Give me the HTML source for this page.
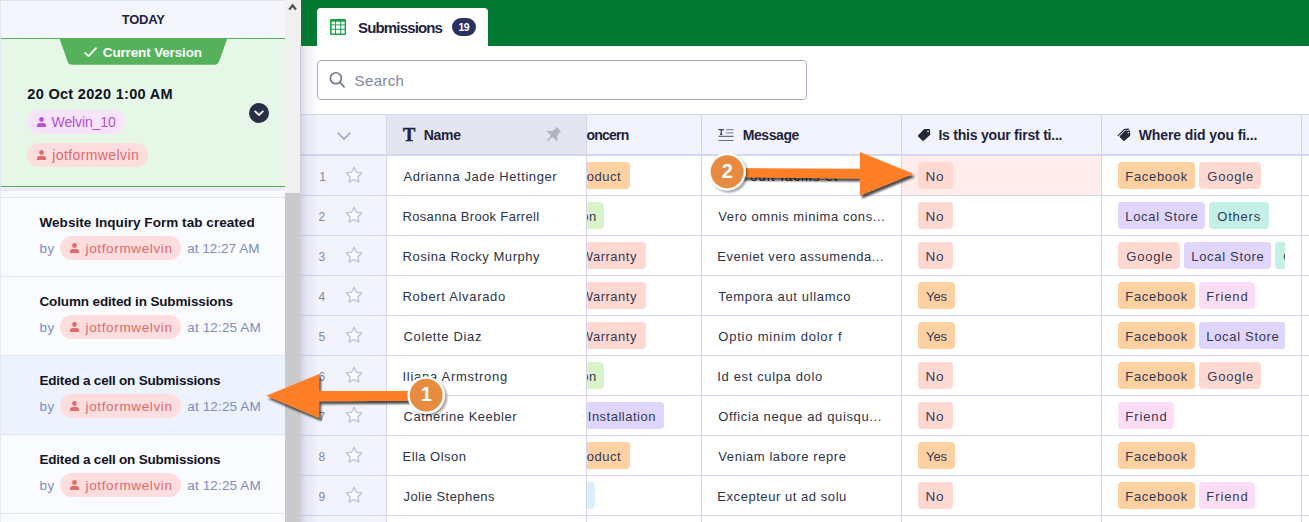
<!DOCTYPE html>
<html lang="en">
<head>
<meta charset="utf-8">
<title>Submissions - Revision History</title>
<style>
*{box-sizing:border-box;margin:0;padding:0}
html,body{width:1309px;height:522px;overflow:hidden;background:#fff}
body{font-family:"Liberation Sans",sans-serif;color:#2c3345;position:relative}
.abs{position:absolute}
.tx{position:absolute;white-space:nowrap;line-height:20px}
#side{position:absolute;left:0;top:0;width:285px;height:522px;background:#fafbfe;overflow:hidden}
#edge{position:absolute;left:0;top:0;width:1px;height:522px;background:#e4e8f3}
#today{position:absolute;left:0;top:0;width:285px;height:38px;background:#f5f5fc;border-top:1px solid #dfe0f1}
#cur{position:absolute;left:0;top:38px;width:285px;height:149px;background:#e6f6e7;border-top:1px solid #55b25b;border-bottom:1px solid #55b25b}
.tag{position:absolute;height:24px;border-radius:12px}
.tag.p{background:#f8e3fd}
.tag.r{background:#feddde}
.item{position:absolute;left:0;width:285px;height:79px;border-top:1px solid #e1e3f2}
.item.sel{background:#ecf2fe}
#sb{position:absolute;left:285px;top:0;width:16px;height:522px;background:#f0f0f0}
#thumb{position:absolute;left:0;top:193px;width:15px;height:329px;background:#cacaca}
#main{position:absolute;left:301px;top:0;width:1008px;height:522px;background:#fff;overflow:hidden}
#green{position:absolute;left:0;top:0;width:1008px;height:46px;background:#037a34}
#tab{position:absolute;left:16px;top:8px;width:171px;height:38px;background:#fff;border-radius:4px 4px 0 0}
#cnt{position:absolute;width:24px;height:18px;border-radius:9px;background:#2b3160}
#search{position:absolute;left:16px;top:60px;width:490px;height:40px;border:1px solid #a9adc6;border-radius:4px;background:#fff}
#scroll{position:absolute;left:286px;top:0;width:722px;height:522px;overflow:hidden}
#shadow{position:absolute;left:300px;top:46px;width:19px;height:476px;background:linear-gradient(90deg,rgba(100,100,150,.24),rgba(100,100,150,.10) 35%,rgba(100,100,150,0))}
.chip{position:absolute;height:27px;border-radius:4px}
.c-or{background:#fed0a2}
.c-pk{background:#ffd9d1}
.c-gr{background:#d9f4cb}
.c-pu{background:#e0d5fc}
.c-tl{background:#c4f0e8}
.c-ro{background:#fddcf6}
.c-bl{background:#dbeefc}
</style>
</head>
<body>
<div id="side">
<div id="today"></div>
<span class="tx" style="left:121.70px;top:10.00px;font-size:13px;color:#1d2340;letter-spacing:-0.225px;font-weight:bold;">TODAY</span>
<div id="cur"></div>
<svg class="abs" style="left:59px;top:38px" width="169" height="27" viewBox="0 0 169 27"><path d="M0.3 0H168.4L160.2 23.3Q159 26.8 155.2 26.8H13.5Q9.700000000000001 26.8 8.5 23.3Z" fill="#55b25b"/><path d="M26.1 14.9L29.5 18.1L37 10.2" fill="none" stroke="#fff" stroke-width="1.8" stroke-linecap="round" stroke-linejoin="round"/></svg>
<span class="tx" style="left:102.80px;top:43.00px;font-size:13.5px;color:#fff;letter-spacing:-0.145px;font-weight:bold;">Current Version</span>
<span class="tx" style="left:27.30px;top:84.00px;font-size:14.5px;color:#0f1222;letter-spacing:0.313px;font-weight:bold;">20 Oct 2020 1:00 AM</span>
<div class="tag p" style="left:27px;top:110px;width:98px"></div>
<svg class="abs" style="left:37px;top:117.3px" width="9" height="10" viewBox="0 0 9 10"><circle cx="4.5" cy="2.5" r="2.4" fill="#b552d8"/><path d="M0 10V8.6Q0 5.9 2.7 5.9h3.6Q9 5.9 9 8.6V10z" fill="#b552d8"/></svg>
<span class="tx" style="left:51.60px;top:112.00px;font-size:14px;color:#b24fd4;letter-spacing:-0.128px;">Welvin_10</span>
<div class="tag r" style="left:27px;top:143px;width:121px"></div>
<svg class="abs" style="left:37px;top:150.3px" width="9" height="10" viewBox="0 0 9 10"><circle cx="4.5" cy="2.5" r="2.4" fill="#e06c6c"/><path d="M0 10V8.6Q0 5.9 2.7 5.9h3.6Q9 5.9 9 8.6V10z" fill="#e06c6c"/></svg>
<span class="tx" style="left:52.30px;top:145.00px;font-size:14px;color:#e0696d;letter-spacing:0.391px;">jotformwelvin</span>
<div class="abs" style="left:0;top:187px;width:285px;height:4px;background:#ecebf8"></div>
<svg class="abs" style="left:249px;top:103px" width="20" height="20" viewBox="0 0 20 20"><circle cx="10" cy="10" r="10" fill="#282e46"/><path d="M6.2 8.4l3.8 3.6 3.8-3.6" fill="none" stroke="#fff" stroke-width="1.8" stroke-linecap="round" stroke-linejoin="round"/></svg>
<div class="item" style="top:197px"></div>
<span class="tx" style="left:39.50px;top:213.00px;font-size:13.5px;color:#111424;letter-spacing:0.052px;font-weight:bold;">Website Inquiry Form tab created</span>
<span class="tx" style="left:39.50px;top:239.00px;font-size:13.5px;color:#808cc0;letter-spacing:0.492px;">by</span>
<div class="tag r" style="left:60px;top:236px;width:121px"></div>
<svg class="abs" style="left:70.2px;top:243.4px" width="9" height="10" viewBox="0 0 9 10"><circle cx="4.5" cy="2.5" r="2.4" fill="#e06c6c"/><path d="M0 10V8.6Q0 5.9 2.7 5.9h3.6Q9 5.9 9 8.6V10z" fill="#e06c6c"/></svg>
<span class="tx" style="left:85.50px;top:239.00px;font-size:13.5px;color:#e0696d;letter-spacing:0.645px;">jotformwelvin</span>
<span class="tx" style="left:187.30px;top:239.00px;font-size:13.5px;color:#808cc0;letter-spacing:0.005px;">at 12:27 AM</span>
<div class="item" style="top:276px"></div>
<span class="tx" style="left:39.50px;top:292.00px;font-size:13.5px;color:#111424;letter-spacing:-0.139px;font-weight:bold;">Column edited in Submissions</span>
<span class="tx" style="left:39.50px;top:318.00px;font-size:13.5px;color:#808cc0;letter-spacing:0.492px;">by</span>
<div class="tag r" style="left:60px;top:315px;width:121px"></div>
<svg class="abs" style="left:70.2px;top:322.4px" width="9" height="10" viewBox="0 0 9 10"><circle cx="4.5" cy="2.5" r="2.4" fill="#e06c6c"/><path d="M0 10V8.6Q0 5.9 2.7 5.9h3.6Q9 5.9 9 8.6V10z" fill="#e06c6c"/></svg>
<span class="tx" style="left:85.50px;top:318.00px;font-size:13.5px;color:#e0696d;letter-spacing:0.645px;">jotformwelvin</span>
<span class="tx" style="left:187.30px;top:318.00px;font-size:13.5px;color:#808cc0;letter-spacing:0.135px;">at 12:25 AM</span>
<div class="item sel" style="top:355px"></div>
<span class="tx" style="left:39.50px;top:371.00px;font-size:13.5px;color:#111424;letter-spacing:-0.211px;font-weight:bold;">Edited a cell on Submissions</span>
<span class="tx" style="left:39.50px;top:397.00px;font-size:13.5px;color:#808cc0;letter-spacing:0.492px;">by</span>
<div class="tag r" style="left:60px;top:394px;width:121px"></div>
<svg class="abs" style="left:70.2px;top:401.4px" width="9" height="10" viewBox="0 0 9 10"><circle cx="4.5" cy="2.5" r="2.4" fill="#e06c6c"/><path d="M0 10V8.6Q0 5.9 2.7 5.9h3.6Q9 5.9 9 8.6V10z" fill="#e06c6c"/></svg>
<span class="tx" style="left:85.50px;top:397.00px;font-size:13.5px;color:#e0696d;letter-spacing:0.645px;">jotformwelvin</span>
<span class="tx" style="left:187.30px;top:397.00px;font-size:13.5px;color:#808cc0;letter-spacing:0.135px;">at 12:25 AM</span>
<div class="item" style="top:434px"></div>
<span class="tx" style="left:39.50px;top:450.00px;font-size:13.5px;color:#111424;letter-spacing:-0.211px;font-weight:bold;">Edited a cell on Submissions</span>
<span class="tx" style="left:39.50px;top:476.00px;font-size:13.5px;color:#808cc0;letter-spacing:0.492px;">by</span>
<div class="tag r" style="left:60px;top:473px;width:121px"></div>
<svg class="abs" style="left:70.2px;top:480.4px" width="9" height="10" viewBox="0 0 9 10"><circle cx="4.5" cy="2.5" r="2.4" fill="#e06c6c"/><path d="M0 10V8.6Q0 5.9 2.7 5.9h3.6Q9 5.9 9 8.6V10z" fill="#e06c6c"/></svg>
<span class="tx" style="left:85.50px;top:476.00px;font-size:13.5px;color:#e0696d;letter-spacing:0.645px;">jotformwelvin</span>
<span class="tx" style="left:187.30px;top:476.00px;font-size:13.5px;color:#808cc0;letter-spacing:0.135px;">at 12:25 AM</span>
<div class="item" style="top:513px;height:9px"></div>
<div id="edge"></div>
</div>
<div id="sb">
<svg class="abs" style="left:3px;top:3px" width="10" height="8" viewBox="0 0 10 8"><path d="M1.3 6.6L4.6 2.3L7.9 6.6" fill="none" stroke="#505050" stroke-width="2.3"/></svg>
<div id="thumb"></div>
</div>
<div id="main">
<div id="green"></div>
<div id="tab"></div>
<svg class="abs" style="left:29.4px;top:19px" width="16" height="16" viewBox="0 0 16 16"><rect width="16" height="16" rx="1" fill="#18a34b"/><g fill="#fff"><rect x="1.6" y="2.7" width="3.4" height="2.7"/><rect x="6.0" y="2.7" width="4.2" height="2.7"/><rect x="11.2" y="2.7" width="3.4" height="2.7"/><rect x="1.6" y="6.4" width="3.4" height="3.4"/><rect x="6.0" y="6.4" width="4.2" height="3.4"/><rect x="11.2" y="6.4" width="3.4" height="3.4"/><rect x="1.6" y="10.8" width="3.4" height="3.7"/><rect x="6.0" y="10.8" width="4.2" height="3.7"/><rect x="11.2" y="10.8" width="3.4" height="3.7"/></g></svg>
<span class="tx" style="left:57.00px;top:18.00px;font-size:15px;color:#1d2340;letter-spacing:-0.841px;font-weight:bold;">Submissions</span>
<div id="cnt" style="left:151px;top:18px"></div>
<span class="tx" style="left:157.60px;top:17.00px;font-size:10.5px;color:#fff;letter-spacing:-0.600px;font-weight:bold;">19</span>
<div id="search"></div>
<svg class="abs" style="left:27px;top:71px" width="18" height="18" viewBox="0 0 18 18"><circle cx="7.9" cy="7.3" r="5.5" fill="none" stroke="#6f7690" stroke-width="1.6"/><path d="M12 11.5l4.1 4.3" stroke="#6f7690" stroke-width="1.7" stroke-linecap="round"/></svg>
<span class="tx" style="left:53.60px;top:71.00px;font-size:15px;color:#7f879e;letter-spacing:0.363px;">Search</span>
<div class="abs" style="left:0;top:114px;width:1008px;height:42px;background:#f3f3fe"></div>
<div class="abs" style="left:0;top:155px;width:85px;height:367px;background:#f3f3fe"></div>
<div class="abs" style="left:86px;top:115px;width:200px;height:40px;background:#e3e6f0"></div>
<div class="abs" style="left:601px;top:156px;width:199px;height:39px;background:#ffeceb"></div>
<span class="tx" style="left:18.30px;top:167.00px;font-size:12px;color:#8288a0;">1</span>
<svg class="abs" style="left:44px;top:165.7px" width="18" height="18" viewBox="0 0 18 18"><path d="M9 1.3l2.35 4.95 5.35.7-3.9 3.75.97 5.35L9 13.45l-4.77 2.6.97-5.35L1.300000000000001 6.95l5.35-.7z" fill="#fff" stroke="#b7bad3" stroke-width="1.25" stroke-linejoin="round"/></svg>
<span class="tx" style="left:102.50px;top:167.00px;font-size:13px;color:#2c3345;letter-spacing:0.588px;">Adrianna Jade Hettinger</span>
<span class="tx" style="left:17.40px;top:207.00px;font-size:12px;color:#8288a0;">2</span>
<svg class="abs" style="left:44px;top:205.7px" width="18" height="18" viewBox="0 0 18 18"><path d="M9 1.3l2.35 4.95 5.35.7-3.9 3.75.97 5.35L9 13.45l-4.77 2.6.97-5.35L1.300000000000001 6.95l5.35-.7z" fill="#fff" stroke="#b7bad3" stroke-width="1.25" stroke-linejoin="round"/></svg>
<span class="tx" style="left:101.50px;top:207.00px;font-size:13px;color:#2c3345;letter-spacing:0.332px;">Rosanna Brook Farrell</span>
<span class="tx" style="left:17.40px;top:247.00px;font-size:12px;color:#8288a0;">3</span>
<svg class="abs" style="left:44px;top:245.7px" width="18" height="18" viewBox="0 0 18 18"><path d="M9 1.3l2.35 4.95 5.35.7-3.9 3.75.97 5.35L9 13.45l-4.77 2.6.97-5.35L1.300000000000001 6.95l5.35-.7z" fill="#fff" stroke="#b7bad3" stroke-width="1.25" stroke-linejoin="round"/></svg>
<span class="tx" style="left:101.50px;top:247.00px;font-size:13px;color:#2c3345;letter-spacing:0.552px;">Rosina Rocky Murphy</span>
<span class="tx" style="left:17.40px;top:287.00px;font-size:12px;color:#8288a0;">4</span>
<svg class="abs" style="left:44px;top:285.7px" width="18" height="18" viewBox="0 0 18 18"><path d="M9 1.3l2.35 4.95 5.35.7-3.9 3.75.97 5.35L9 13.45l-4.77 2.6.97-5.35L1.300000000000001 6.95l5.35-.7z" fill="#fff" stroke="#b7bad3" stroke-width="1.25" stroke-linejoin="round"/></svg>
<span class="tx" style="left:101.50px;top:287.00px;font-size:13px;color:#2c3345;letter-spacing:0.678px;">Robert Alvarado</span>
<span class="tx" style="left:17.40px;top:327.00px;font-size:12px;color:#8288a0;">5</span>
<svg class="abs" style="left:44px;top:325.7px" width="18" height="18" viewBox="0 0 18 18"><path d="M9 1.3l2.35 4.95 5.35.7-3.9 3.75.97 5.35L9 13.45l-4.77 2.6.97-5.35L1.300000000000001 6.95l5.35-.7z" fill="#fff" stroke="#b7bad3" stroke-width="1.25" stroke-linejoin="round"/></svg>
<span class="tx" style="left:102.50px;top:327.00px;font-size:13px;color:#2c3345;letter-spacing:0.645px;">Colette Diaz</span>
<span class="tx" style="left:17.40px;top:367.00px;font-size:12px;color:#8288a0;">6</span>
<svg class="abs" style="left:44px;top:365.7px" width="18" height="18" viewBox="0 0 18 18"><path d="M9 1.3l2.35 4.95 5.35.7-3.9 3.75.97 5.35L9 13.45l-4.77 2.6.97-5.35L1.300000000000001 6.95l5.35-.7z" fill="#fff" stroke="#b7bad3" stroke-width="1.25" stroke-linejoin="round"/></svg>
<span class="tx" style="left:101.50px;top:367.00px;font-size:13px;color:#2c3345;letter-spacing:0.719px;">Iliana Armstrong</span>
<span class="tx" style="left:17.40px;top:407.00px;font-size:12px;color:#8288a0;">7</span>
<svg class="abs" style="left:44px;top:405.7px" width="18" height="18" viewBox="0 0 18 18"><path d="M9 1.3l2.35 4.95 5.35.7-3.9 3.75.97 5.35L9 13.45l-4.77 2.6.97-5.35L1.300000000000001 6.95l5.35-.7z" fill="#fff" stroke="#b7bad3" stroke-width="1.25" stroke-linejoin="round"/></svg>
<span class="tx" style="left:102.50px;top:407.00px;font-size:13px;color:#2c3345;letter-spacing:0.515px;">Catherine Keebler</span>
<span class="tx" style="left:17.40px;top:447.00px;font-size:12px;color:#8288a0;">8</span>
<svg class="abs" style="left:44px;top:445.7px" width="18" height="18" viewBox="0 0 18 18"><path d="M9 1.3l2.35 4.95 5.35.7-3.9 3.75.97 5.35L9 13.45l-4.77 2.6.97-5.35L1.300000000000001 6.95l5.35-.7z" fill="#fff" stroke="#b7bad3" stroke-width="1.25" stroke-linejoin="round"/></svg>
<span class="tx" style="left:101.50px;top:447.00px;font-size:13px;color:#2c3345;letter-spacing:0.465px;">Ella Olson</span>
<span class="tx" style="left:17.40px;top:487.00px;font-size:12px;color:#8288a0;">9</span>
<svg class="abs" style="left:44px;top:485.7px" width="18" height="18" viewBox="0 0 18 18"><path d="M9 1.3l2.35 4.95 5.35.7-3.9 3.75.97 5.35L9 13.45l-4.77 2.6.97-5.35L1.300000000000001 6.95l5.35-.7z" fill="#fff" stroke="#b7bad3" stroke-width="1.25" stroke-linejoin="round"/></svg>
<span class="tx" style="left:102.50px;top:487.00px;font-size:13px;color:#2c3345;letter-spacing:0.440px;">Jolie Stephens</span>
<svg class="abs" style="left:35px;top:131px" width="16" height="10" viewBox="0 0 16 10"><path d="M1.6 1.6l6.4 6.4 6.4-6.4" fill="none" stroke="#aeb1ca" stroke-width="2"/></svg>
<span class="tx" style="left:101.89999999999998px;top:123.6px;font-family:'Liberation Serif',serif;font-weight:bold;font-size:18.5px;line-height:22px;color:#1d2340;-webkit-text-stroke:.45px #1d2340">T</span>
<span class="tx" style="left:122.70px;top:125.00px;font-size:14px;color:#1d2340;letter-spacing:-0.282px;font-weight:bold;">Name</span>
<svg class="abs" style="left:245px;top:126px" width="16" height="16" viewBox="0 0 16 16"><path d="M10.6 0.8L15.1 5.4L13.9 6.1L11.2 9.7L11.5 14.5L10.600000000000001 15L6.3 11L1.3 15.5L0.6 14.8L5 9.7L0.8 5.6L1.4 4.7L6.2 5.200000000000001L9.9 2.3Z" fill="#b1b3bf"/></svg>
<div id="scroll">
<div class="chip c-or" style="left:-87.3px;top:162px;width:130px"></div>
<span class="tx" style="left:-14.29px;top:167.00px;font-size:13px;color:#343a52;letter-spacing:0.500px;">Product</span>
<span class="tx" style="left:130.30px;top:167.00px;font-size:13px;color:#2c3345;letter-spacing:1.107px;">Erat odit facilis et</span>
<div class="chip c-pk" style="left:331px;top:162px;width:34.5px"></div>
<span class="tx" style="left:338.40px;top:167.00px;font-size:13.5px;color:#343a52;letter-spacing:0.800px;">No</span>
<div class="abs" style="left:531px;top:162px;width:166.7px;height:27px;overflow:hidden">
<div class="chip c-or" style="left:0px;top:0;width:77px"></div>
<span class="tx" style="left:7.30px;top:5.00px;font-size:13px;color:#343a52;letter-spacing:0.687px;">Facebook</span>
<div class="chip c-pk" style="left:81px;top:0;width:62px"></div>
<span class="tx" style="left:89.30px;top:5.00px;font-size:13px;color:#343a52;letter-spacing:0.802px;">Google</span>
</div>
<div class="chip c-gr" style="left:-113.3px;top:202px;width:130px"></div>
<span class="tx" style="left:-46.30px;top:207.00px;font-size:13px;color:#343a52;letter-spacing:0.500px;">Question</span>
<span class="tx" style="left:131.30px;top:207.00px;font-size:13px;color:#2c3345;letter-spacing:0.582px;">Vero omnis minima cons...</span>
<div class="chip c-pk" style="left:331px;top:202px;width:34.5px"></div>
<span class="tx" style="left:338.40px;top:207.00px;font-size:13.5px;color:#343a52;letter-spacing:0.800px;">No</span>
<div class="abs" style="left:531px;top:202px;width:166.7px;height:27px;overflow:hidden">
<div class="chip c-pu" style="left:0px;top:0;width:87px"></div>
<span class="tx" style="left:7.30px;top:5.00px;font-size:13px;color:#343a52;letter-spacing:0.677px;">Local Store</span>
<div class="chip c-tl" style="left:91px;top:0;width:60px"></div>
<span class="tx" style="left:99.30px;top:5.00px;font-size:13px;color:#343a52;letter-spacing:0.777px;">Others</span>
</div>
<div class="chip c-pk" style="left:-71.3px;top:242px;width:130px"></div>
<span class="tx" style="left:-6.35px;top:247.00px;font-size:13px;color:#343a52;letter-spacing:0.500px;">Warranty</span>
<span class="tx" style="left:130.30px;top:247.00px;font-size:13px;color:#2c3345;letter-spacing:0.512px;">Eveniet vero assumenda...</span>
<div class="chip c-pk" style="left:331px;top:242px;width:34.5px"></div>
<span class="tx" style="left:338.40px;top:247.00px;font-size:13.5px;color:#343a52;letter-spacing:0.800px;">No</span>
<div class="abs" style="left:531px;top:242px;width:166.7px;height:27px;overflow:hidden">
<div class="chip c-pk" style="left:0px;top:0;width:62px"></div>
<span class="tx" style="left:8.30px;top:5.00px;font-size:13px;color:#343a52;letter-spacing:0.802px;">Google</span>
<div class="chip c-pu" style="left:66px;top:0;width:87px"></div>
<span class="tx" style="left:73.30px;top:5.00px;font-size:13px;color:#343a52;letter-spacing:0.677px;">Local Store</span>
<div class="chip c-tl" style="left:157px;top:0;width:60px"></div>
<span class="tx" style="left:165.30px;top:5.00px;font-size:13px;color:#343a52;letter-spacing:0.777px;">Others</span>
</div>
<div class="chip c-pk" style="left:-71.3px;top:282px;width:130px"></div>
<span class="tx" style="left:-6.35px;top:287.00px;font-size:13px;color:#343a52;letter-spacing:0.500px;">Warranty</span>
<span class="tx" style="left:131.30px;top:287.00px;font-size:13px;color:#2c3345;letter-spacing:0.642px;">Tempora aut ullamco</span>
<div class="chip c-or" style="left:331px;top:282px;width:37px"></div>
<span class="tx" style="left:339.00px;top:287.00px;font-size:13px;color:#343a52;letter-spacing:-0.054px;">Yes</span>
<div class="abs" style="left:531px;top:282px;width:166.7px;height:27px;overflow:hidden">
<div class="chip c-or" style="left:0px;top:0;width:77px"></div>
<span class="tx" style="left:7.30px;top:5.00px;font-size:13px;color:#343a52;letter-spacing:0.687px;">Facebook</span>
<div class="chip c-ro" style="left:81px;top:0;width:56px"></div>
<span class="tx" style="left:88.30px;top:5.00px;font-size:13px;color:#343a52;letter-spacing:0.916px;">Friend</span>
</div>
<div class="chip c-pk" style="left:-71.3px;top:322px;width:130px"></div>
<span class="tx" style="left:-6.35px;top:327.00px;font-size:13px;color:#343a52;letter-spacing:0.500px;">Warranty</span>
<span class="tx" style="left:131.30px;top:327.00px;font-size:13px;color:#2c3345;letter-spacing:0.784px;">Optio minim dolor f</span>
<div class="chip c-or" style="left:331px;top:322px;width:37px"></div>
<span class="tx" style="left:339.00px;top:327.00px;font-size:13px;color:#343a52;letter-spacing:-0.054px;">Yes</span>
<div class="abs" style="left:531px;top:322px;width:166.7px;height:27px;overflow:hidden">
<div class="chip c-or" style="left:0px;top:0;width:77px"></div>
<span class="tx" style="left:7.30px;top:5.00px;font-size:13px;color:#343a52;letter-spacing:0.687px;">Facebook</span>
<div class="chip c-pu" style="left:81px;top:0;width:87px"></div>
<span class="tx" style="left:88.30px;top:5.00px;font-size:13px;color:#343a52;letter-spacing:0.677px;">Local Store</span>
</div>
<div class="chip c-gr" style="left:-113.3px;top:362px;width:130px"></div>
<span class="tx" style="left:-46.30px;top:367.00px;font-size:13px;color:#343a52;letter-spacing:0.500px;">Question</span>
<span class="tx" style="left:130.30px;top:367.00px;font-size:13px;color:#2c3345;letter-spacing:0.641px;">Id est culpa dolo</span>
<div class="chip c-pk" style="left:331px;top:362px;width:34.5px"></div>
<span class="tx" style="left:338.40px;top:367.00px;font-size:13.5px;color:#343a52;letter-spacing:0.800px;">No</span>
<div class="abs" style="left:531px;top:362px;width:166.7px;height:27px;overflow:hidden">
<div class="chip c-or" style="left:0px;top:0;width:77px"></div>
<span class="tx" style="left:7.30px;top:5.00px;font-size:13px;color:#343a52;letter-spacing:0.687px;">Facebook</span>
<div class="chip c-pk" style="left:81px;top:0;width:62px"></div>
<span class="tx" style="left:89.30px;top:5.00px;font-size:13px;color:#343a52;letter-spacing:0.802px;">Google</span>
</div>
<div class="chip c-pu" style="left:-53.3px;top:402px;width:130px"></div>
<span class="tx" style="left:0.78px;top:407.00px;font-size:13px;color:#343a52;letter-spacing:0.500px;">Installation</span>
<span class="tx" style="left:131.30px;top:407.00px;font-size:13px;color:#2c3345;letter-spacing:0.637px;">Officia neque ad quisqu...</span>
<div class="chip c-pk" style="left:331px;top:402px;width:34.5px"></div>
<span class="tx" style="left:338.40px;top:407.00px;font-size:13.5px;color:#343a52;letter-spacing:0.800px;">No</span>
<div class="abs" style="left:531px;top:402px;width:166.7px;height:27px;overflow:hidden">
<div class="chip c-ro" style="left:0px;top:0;width:56px"></div>
<span class="tx" style="left:7.30px;top:5.00px;font-size:13px;color:#343a52;letter-spacing:0.916px;">Friend</span>
</div>
<div class="chip c-or" style="left:-87.3px;top:442px;width:130px"></div>
<span class="tx" style="left:-14.29px;top:447.00px;font-size:13px;color:#343a52;letter-spacing:0.500px;">Product</span>
<span class="tx" style="left:131.30px;top:447.00px;font-size:13px;color:#2c3345;letter-spacing:0.587px;">Veniam labore repre</span>
<div class="chip c-or" style="left:331px;top:442px;width:37px"></div>
<span class="tx" style="left:339.00px;top:447.00px;font-size:13px;color:#343a52;letter-spacing:-0.054px;">Yes</span>
<div class="abs" style="left:531px;top:442px;width:166.7px;height:27px;overflow:hidden">
<div class="chip c-or" style="left:0px;top:0;width:77px"></div>
<span class="tx" style="left:7.30px;top:5.00px;font-size:13px;color:#343a52;letter-spacing:0.687px;">Facebook</span>
</div>
<div class="chip c-bl" style="left:-122.2px;top:482px;width:130px"></div>
<span class="tx" style="left:-42.71px;top:487.00px;font-size:13px;color:#343a52;letter-spacing:0.500px;">Others</span>
<span class="tx" style="left:130.30px;top:487.00px;font-size:13px;color:#2c3345;letter-spacing:0.553px;">Excepteur ut ad solu</span>
<div class="chip c-pk" style="left:331px;top:482px;width:34.5px"></div>
<span class="tx" style="left:338.40px;top:487.00px;font-size:13.5px;color:#343a52;letter-spacing:0.800px;">No</span>
<div class="abs" style="left:531px;top:482px;width:166.7px;height:27px;overflow:hidden">
<div class="chip c-or" style="left:0px;top:0;width:77px"></div>
<span class="tx" style="left:7.30px;top:5.00px;font-size:13px;color:#343a52;letter-spacing:0.687px;">Facebook</span>
<div class="chip c-ro" style="left:81px;top:0;width:56px"></div>
<span class="tx" style="left:88.30px;top:5.00px;font-size:13px;color:#343a52;letter-spacing:0.916px;">Friend</span>
</div>
<span class="tx" style="left:-9.73px;top:125.00px;font-size:14px;color:#1d2340;letter-spacing:-0.800px;font-weight:bold;">Concern</span>
<svg class="abs" style="left:131px;top:128px" width="16" height="14" viewBox="0 0 16 14"><g fill="none"><path d="M0.4 1.6H6M3.2 1.6V6.2M2 6.4H4.4" stroke="#3b4160" stroke-width="1.25"/><path d="M8.2 1.7H15.6M8.2 4.9H15.6" stroke="#8d92aa" stroke-width="1.2"/><path d="M0.4 8.4H15.6M0.4 12.5H15.6" stroke="#6a7088" stroke-width="1.2"/></g></svg>
<span class="tx" style="left:155.70px;top:125.00px;font-size:14px;color:#1d2340;letter-spacing:-0.410px;font-weight:bold;">Message</span>
<svg class="abs" style="left:330px;top:128px" width="14" height="14" viewBox="0 0 14 14"><path d="M7.2 1.1L12.2 0.9Q13 0.9 13 1.7L13.3 6.2Q13.3 6.700000000000001 12.9 7.1L6.6 12.7Q5.9 13.2 5.3 12.6L1.1 8.4Q0.5 7.800000000000001 1.1 7.2Z" fill="#23283a"/><rect x="10.3" y="2.6" width="1.5" height="1.5" fill="#f3f3fe"/></svg>
<span class="tx" style="left:351.40px;top:125.00px;font-size:14px;color:#1d2340;letter-spacing:-0.219px;font-weight:bold;">Is this your first ti...</span>
<svg class="abs" style="left:530px;top:128px" width="14" height="14" viewBox="0 0 14 14"><path d="M8.1 2.6L12.3 2.5Q13 2.5 13 3.2L13.3 7.1Q13.3 7.6 12.9 8L7.5 12.8Q6.9 13.3 6.3 12.7L2.9 9.3Q2.3 8.700000000000001 2.9 8.1Z" fill="#23283a"/><path d="M1.2 7.6L7.1 1.6Q7.4 1.3 7.8 1.3L11.6 1.1" fill="none" stroke="#23283a" stroke-width="1.2" stroke-linecap="round"/><rect x="10.7" y="4.1" width="1.3" height="1.3" fill="#f3f3fe"/></svg>
<span class="tx" style="left:551.70px;top:125.00px;font-size:14px;color:#1d2340;letter-spacing:-0.098px;font-weight:bold;">Where did you fi...</span>
</div>
<div class="abs" style="left:0;top:114px;width:1008px;height:1px;background:#d5d6ef"></div>
<div class="abs" style="left:0;top:154px;width:1008px;height:1px;background:#d5d6ef"></div>
<div class="abs" style="left:0;top:155px;width:1008px;height:1px;background:#d5d6ef"></div>
<div class="abs" style="left:0;top:195px;width:1008px;height:1px;background:#d5d6ef"></div>
<div class="abs" style="left:0;top:235px;width:1008px;height:1px;background:#d5d6ef"></div>
<div class="abs" style="left:0;top:275px;width:1008px;height:1px;background:#d5d6ef"></div>
<div class="abs" style="left:0;top:315px;width:1008px;height:1px;background:#d5d6ef"></div>
<div class="abs" style="left:0;top:355px;width:1008px;height:1px;background:#d5d6ef"></div>
<div class="abs" style="left:0;top:395px;width:1008px;height:1px;background:#d5d6ef"></div>
<div class="abs" style="left:0;top:435px;width:1008px;height:1px;background:#d5d6ef"></div>
<div class="abs" style="left:0;top:475px;width:1008px;height:1px;background:#d5d6ef"></div>
<div class="abs" style="left:0;top:515px;width:1008px;height:1px;background:#d5d6ef"></div>
<div class="abs" style="left:85px;top:114px;width:1px;height:408px;background:#d5d6ef"></div>
<div class="abs" style="left:285px;top:114px;width:1px;height:408px;background:#d5d6ef"></div>
<div class="abs" style="left:400px;top:114px;width:1px;height:408px;background:#d5d6ef"></div>
<div class="abs" style="left:600px;top:114px;width:1px;height:408px;background:#d5d6ef"></div>
<div class="abs" style="left:800px;top:114px;width:1px;height:408px;background:#d5d6ef"></div>
<div class="abs" style="left:1000px;top:114px;width:1px;height:408px;background:#d5d6ef"></div>
</div>
<div id="shadow"></div>
<svg id="arrows" class="abs" style="left:0;top:0;pointer-events:none" width="1309" height="522" viewBox="0 0 1309 522">
<defs>
<filter id="ds" x="-10%" y="-20%" width="120%" height="150%"><feGaussianBlur in="SourceAlpha" stdDeviation="1"/><feOffset dx="2.2" dy="3"/><feComponentTransfer><feFuncA type="linear" slope=".7"/></feComponentTransfer><feMerge><feMergeNode/><feMergeNode in="SourceGraphic"/></feMerge></filter>
<filter id="cs" x="-20%" y="-20%" width="150%" height="150%"><feGaussianBlur in="SourceAlpha" stdDeviation="1.2"/><feOffset dx="1.5" dy="1.8"/><feComponentTransfer><feFuncA type="linear" slope=".38"/></feComponentTransfer><feMerge><feMergeNode/><feMergeNode in="SourceGraphic"/></feMerge></filter>
</defs>
<path filter="url(#ds)" d="M266.1 395.8L319.1 374V390.9L426 391.1V400.7L319.1 401.2V417.9Z" fill="#ff7f27"/>
<g filter="url(#cs)"><circle cx="426.2" cy="395.2" r="18.8" fill="#fff"/><circle cx="426.2" cy="395.2" r="16.4" fill="#e68b3f"/></g>
<text x="426.2" y="401.3" text-anchor="middle" font-family="Liberation Sans, sans-serif" font-weight="bold" font-size="20" fill="#fff">1</text>
<path filter="url(#ds)" d="M727 168.1L859.9 168.8V151.9L913.4 173.7L859.9 195.6V178.6L727 177.2Z" fill="#ff7f27"/>
<g filter="url(#cs)"><circle cx="727.1" cy="171.7" r="18.8" fill="#fff"/><circle cx="727.1" cy="171.7" r="16.5" fill="#e68b3f"/></g>
<text x="727.3" y="178.3" text-anchor="middle" font-family="Liberation Sans, sans-serif" font-weight="bold" font-size="20" fill="#fff">2</text>
</svg>
</body>
</html>
